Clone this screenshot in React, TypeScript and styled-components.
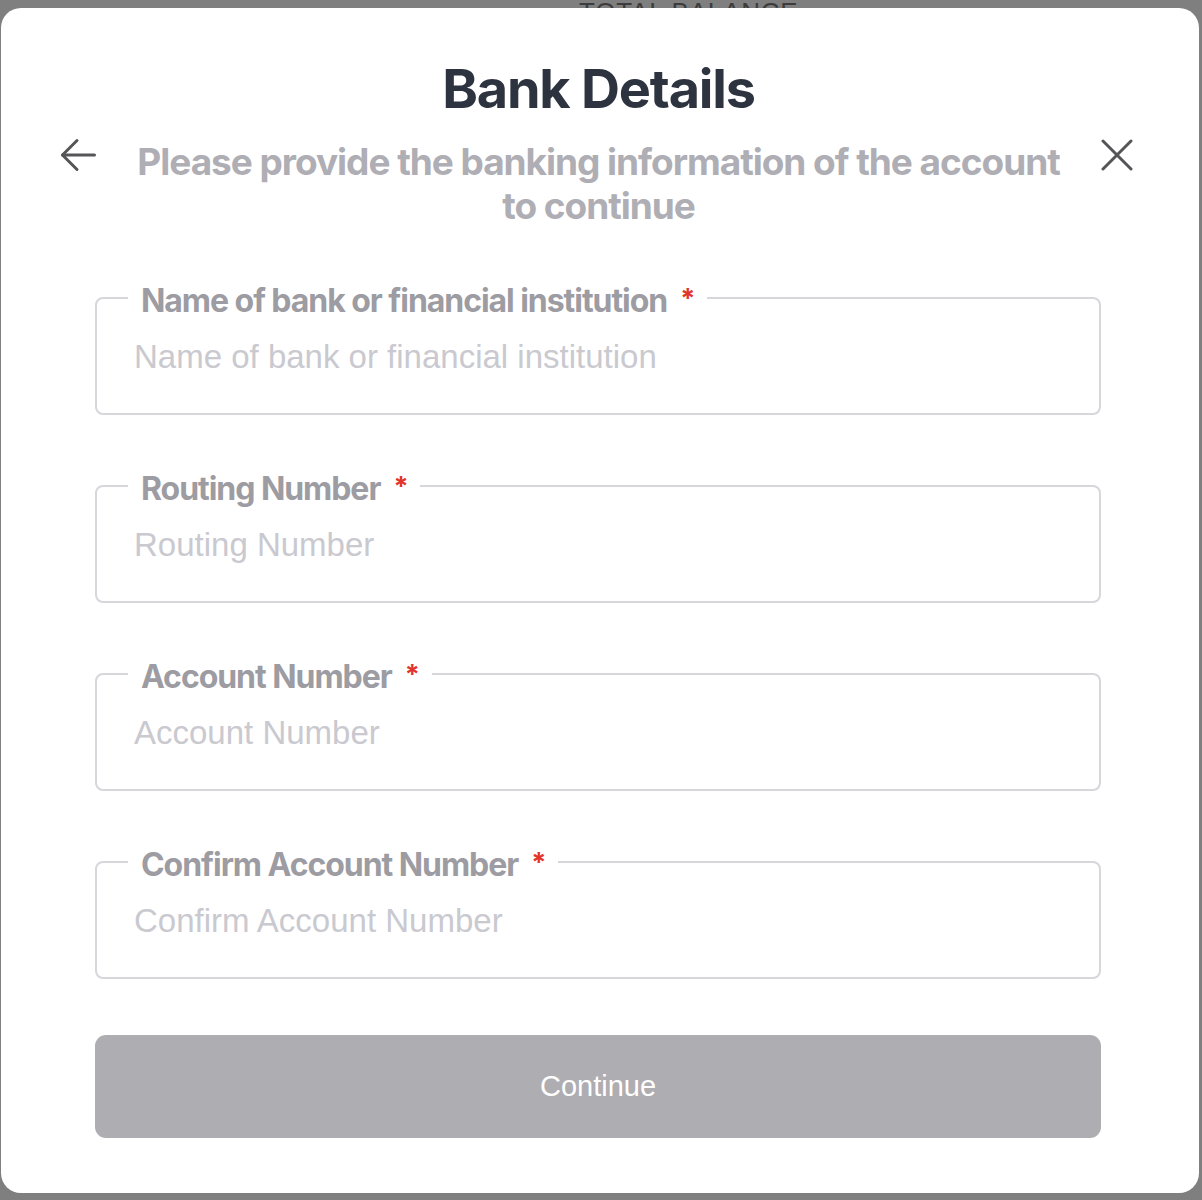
import React from "react";
import styled, { createGlobalStyle } from "styled-components";

const Global = createGlobalStyle`
  html, body { margin: 0; padding: 0; background: #7f7f7f; }
  * { box-sizing: border-box; }
`;

const Page = styled.div`
  position: relative;
  min-height: 1200px;
  width: 1202px;
  padding: 8px 3px 0 1px;
  overflow: hidden;
  background: #7f7f7f;
`;

const BehindLabel = styled.div`
  position: absolute;
  top: -3px;
  left: 579px;
  font-family: "Liberation Sans", Arial, sans-serif;
  font-size: 26px;
  letter-spacing: 0.8px;
  color: #3c3c3c;
  z-index: 0;
`;

const Modal = styled.div`
  position: relative;
  z-index: 1;
  width: 1198px;
  height: 1185px;
  background: #ffffff;
  border-radius: 20px;
  padding: 45px 66px 0 59px;
  display: flex;
  flex-direction: column;
`;

const Title = styled.h1`
  margin: 0 0 0 4px;
  text-align: center;
  font-family: Inter, "Noto Sans", sans-serif;
  font-weight: 700;
  font-size: 54px;
  line-height: 72px;
  letter-spacing: -1.2px;
  color: #2d3440;
`;

const HeaderRow = styled.div`
  display: flex;
  align-items: flex-start;
  margin-top: 15px;
`;

const IconButton = styled.button<{ $top: number }>`
  flex: none;
  border: none;
  background: none;
  padding: 0;
  margin-top: ${(p) => p.$top}px;
  display: flex;
  color: #555558;
  cursor: pointer;
`;

const Subtitle = styled.p`
  flex: 1;
  margin: 0;
  text-align: center;
  font-family: Inter, "Noto Sans", sans-serif;
  font-weight: 700;
  font-size: 37px;
  line-height: 44px;
  letter-spacing: -1.03px;
  color: #aeaeb4;
`;

const Form = styled.form`
  display: flex;
  flex-direction: column;
  gap: 48px;
  margin: 47px 32px 0 35px;
`;

const Field = styled.fieldset`
  margin: 0;
  min-width: 0;
  padding: 0 37px 14px;
  border: 2px solid #d6d6db;
  border-radius: 8px;
`;

const Legend = styled.legend`
  margin-left: -6px;
  padding: 8px 13px 0;
  font-family: Inter, "Noto Sans", sans-serif;
  font-weight: 700;
  font-size: 32px;
  line-height: 36px;
  letter-spacing: -1.05px;
  color: #9c9ca2;
`;

const Star = styled.span`
  color: #e2342a;
  margin-left: 13px;
  font-size: 27px;
  position: relative;
  top: -4px;
`;

const Input = styled.input`
  display: block;
  width: 100%;
  height: 78px;
  border: none;
  outline: none;
  padding: 0 0 6px;
  background: transparent;
  font-family: "Liberation Sans", Arial, sans-serif;
  font-size: 33px;
  color: #333;
  &::placeholder { color: #c9c9cf; }
`;

const SubmitButton = styled.button`
  margin-top: 8px;
  height: 103px;
  width: 100%;
  border: none;
  border-radius: 11px;
  background: #aeadb1;
  color: #ffffff;
  font-family: "Liberation Sans", Arial, sans-serif;
  font-size: 29px;
  cursor: default;
`;

const ArrowLeft = () => (
  <svg width="36" height="34" viewBox="0 0 36 34" fill="none" stroke="currentColor" strokeWidth="3" strokeLinecap="round" strokeLinejoin="round">
    <path d="M34.5 17H2.5" />
    <path d="M17 2.5L2.5 17L17 31.5" />
  </svg>
);

const CloseIcon = () => (
  <svg width="32" height="32" viewBox="0 0 32 32" fill="none" stroke="currentColor" strokeWidth="3" strokeLinecap="round">
    <path d="M2 2L30 30" />
    <path d="M30 2L2 30" />
  </svg>
);

const fields = [
  "Name of bank or financial institution",
  "Routing Number",
  "Account Number",
  "Confirm Account Number",
];

export default function App() {
  return (
    <>
      <Global />
      <Page>
        <BehindLabel>TOTAL BALANCE</BehindLabel>
        <Modal>
          <Title>Bank Details</Title>
          <HeaderRow>
            <IconButton $top={-2} aria-label="Back">
              <ArrowLeft />
            </IconButton>
            <Subtitle>
              Please provide the banking information of the account
              <br />
              to continue
            </Subtitle>
            <IconButton $top={-1} aria-label="Close">
              <CloseIcon />
            </IconButton>
          </HeaderRow>
          <Form onSubmit={(e) => e.preventDefault()}>
            {fields.map((f) => (
              <Field key={f}>
                <Legend>
                  {f}
                  <Star>*</Star>
                </Legend>
                <Input placeholder={f} />
              </Field>
            ))}
            <SubmitButton type="button">Continue</SubmitButton>
          </Form>
        </Modal>
      </Page>
    </>
  );
}
